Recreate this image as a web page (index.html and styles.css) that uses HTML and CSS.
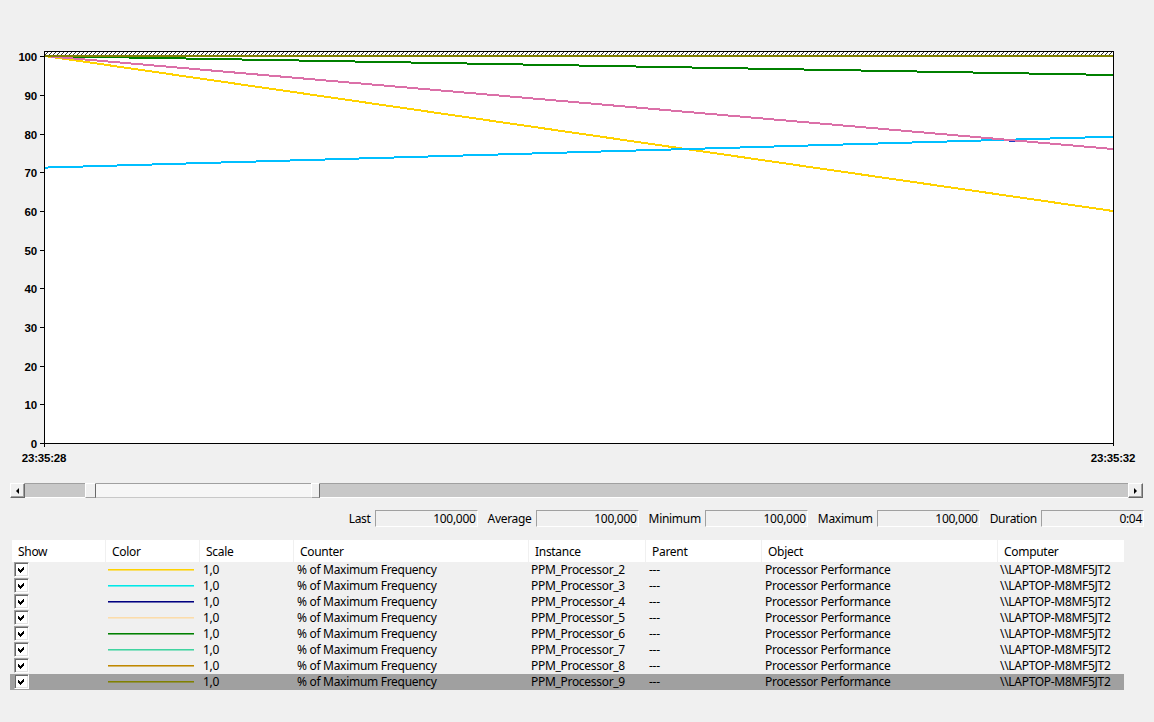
FILE: index.html
```html
<!DOCTYPE html>
<html>
<head>
<meta charset="utf-8">
<link rel="stylesheet" href="styles.css">
</head>
<body>
<div class="app">
  <svg class="chart" width="1154" height="472" viewBox="0 0 1154 472">
    <defs>
      <pattern id="hatch" width="4" height="4" patternUnits="userSpaceOnUse">
        <rect width="4" height="4" fill="#fff"/>
        <path d="M0,4 L4,0 M-1,1 L1,-1 M3,5 L5,3" stroke="#333" stroke-width="1"/>
      </pattern>
      <clipPath id="plot"><rect x="45" y="52" width="1068" height="391"/></clipPath>
    </defs>
    <rect x="44.5" y="51.5" width="1069" height="392" fill="#fff" stroke="#000" stroke-width="1"/>
    <rect x="45" y="52" width="1068" height="3" fill="url(#hatch)"/>
    <g clip-path="url(#plot)" shape-rendering="crispEdges" stroke-width="2" fill="none">
      <line x1="45" y1="56" x2="1113" y2="211" stroke="#ffd200"/>
      <line x1="45" y1="167.6" x2="1113" y2="136.7" stroke="#00bfff"/>
      <line x1="1009" y1="140.5" x2="1022" y2="140.5" stroke="#1a3cc8"/>
      <line x1="45" y1="56" x2="1113" y2="149" stroke="#db70a8"/>
      <line x1="45" y1="56" x2="1113" y2="75" stroke="#008000"/>
      <line x1="45" y1="55.5" x2="1113" y2="55.5" stroke="#808000"/>
    </g>
    <g stroke="#000" stroke-width="1" shape-rendering="crispEdges">
      <line x1="44.5" y1="443" x2="44.5" y2="447"/>
      <line x1="1113.5" y1="443" x2="1113.5" y2="446"/>
      <line x1="40" y1="56.5" x2="44" y2="56.5"/>
      <line x1="40" y1="95.5" x2="44" y2="95.5"/>
      <line x1="40" y1="134.5" x2="44" y2="134.5"/>
      <line x1="40" y1="172.5" x2="44" y2="172.5"/>
      <line x1="40" y1="211.5" x2="44" y2="211.5"/>
      <line x1="40" y1="250.5" x2="44" y2="250.5"/>
      <line x1="40" y1="288.5" x2="44" y2="288.5"/>
      <line x1="40" y1="327.5" x2="44" y2="327.5"/>
      <line x1="40" y1="366.5" x2="44" y2="366.5"/>
      <line x1="40" y1="404.5" x2="44" y2="404.5"/>
      <line x1="40" y1="443.5" x2="44" y2="443.5"/>
    </g>
    <g class="axis-text" text-anchor="end">
      <text x="37" y="61">100</text>
      <text x="37" y="100">90</text>
      <text x="37" y="139">80</text>
      <text x="37" y="177">70</text>
      <text x="37" y="216">60</text>
      <text x="37" y="255">50</text>
      <text x="37" y="293">40</text>
      <text x="37" y="332">30</text>
      <text x="37" y="371">20</text>
      <text x="37" y="409">10</text>
      <text x="37" y="448">0</text>
    </g>
    <g class="axis-text" text-anchor="middle">
      <text x="44" y="462">23:35:28</text>
      <text x="1113" y="462">23:35:32</text>
    </g>
  </svg>

  <div class="scrollbar">
    <div class="sb-btn"><span class="tri-left"></span></div>
    <div class="sb-dim sb-first"></div>
    <div class="sb-thumb"></div>
    <div class="sb-range"></div>
    <div class="sb-thumb sb-thumb-end"></div>
    <div class="sb-dim sb-rest"></div>
    <div class="sb-btn"><span class="tri-right"></span></div>
  </div>

  <div class="stats">
    <div class="stat"><span class="stat-label">Last</span><span class="stat-box">100,000</span></div>
    <div class="stat"><span class="stat-label">Average</span><span class="stat-box">100,000</span></div>
    <div class="stat"><span class="stat-label">Minimum</span><span class="stat-box">100,000</span></div>
    <div class="stat"><span class="stat-label">Maximum</span><span class="stat-box">100,000</span></div>
    <div class="stat"><span class="stat-label">Duration</span><span class="stat-box">0:04</span></div>
  </div>

  <div class="table">
    <div class="thead">
      <div class="th th-first">Show</div>
      <div class="th">Color</div>
      <div class="th">Scale</div>
      <div class="th">Counter</div>
      <div class="th">Instance</div>
      <div class="th">Parent</div>
      <div class="th">Object</div>
      <div class="th th-last">Computer</div>
    </div>

    <div class="tr">
      <div class="td"><span class="cb"><svg width="7" height="7" viewBox="0 0 7 7"><path d="M0,2 L2,4 L6,0 L6,3 L2,7 L0,5 Z" fill="#000"/></svg></span></div>
      <div class="td"><span class="swatch c-gold"></span></div>
      <div class="td td-p3">1,0</div>
      <div class="td td-p3">% of Maximum Frequency</div>
      <div class="td td-p2">PPM_Processor_2</div>
      <div class="td td-p3">---</div>
      <div class="td td-p3">Processor Performance</div>
      <div class="td td-p2">\\LAPTOP-M8MF5JT2</div>
    </div>
    <div class="tr">
      <div class="td"><span class="cb"><svg width="7" height="7" viewBox="0 0 7 7"><path d="M0,2 L2,4 L6,0 L6,3 L2,7 L0,5 Z" fill="#000"/></svg></span></div>
      <div class="td"><span class="swatch c-cyan"></span></div>
      <div class="td td-p3">1,0</div>
      <div class="td td-p3">% of Maximum Frequency</div>
      <div class="td td-p2">PPM_Processor_3</div>
      <div class="td td-p3">---</div>
      <div class="td td-p3">Processor Performance</div>
      <div class="td td-p2">\\LAPTOP-M8MF5JT2</div>
    </div>
    <div class="tr">
      <div class="td"><span class="cb"><svg width="7" height="7" viewBox="0 0 7 7"><path d="M0,2 L2,4 L6,0 L6,3 L2,7 L0,5 Z" fill="#000"/></svg></span></div>
      <div class="td"><span class="swatch c-navy"></span></div>
      <div class="td td-p3">1,0</div>
      <div class="td td-p3">% of Maximum Frequency</div>
      <div class="td td-p2">PPM_Processor_4</div>
      <div class="td td-p3">---</div>
      <div class="td td-p3">Processor Performance</div>
      <div class="td td-p2">\\LAPTOP-M8MF5JT2</div>
    </div>
    <div class="tr">
      <div class="td"><span class="cb"><svg width="7" height="7" viewBox="0 0 7 7"><path d="M0,2 L2,4 L6,0 L6,3 L2,7 L0,5 Z" fill="#000"/></svg></span></div>
      <div class="td"><span class="swatch c-moccasin"></span></div>
      <div class="td td-p3">1,0</div>
      <div class="td td-p3">% of Maximum Frequency</div>
      <div class="td td-p2">PPM_Processor_5</div>
      <div class="td td-p3">---</div>
      <div class="td td-p3">Processor Performance</div>
      <div class="td td-p2">\\LAPTOP-M8MF5JT2</div>
    </div>
    <div class="tr">
      <div class="td"><span class="cb"><svg width="7" height="7" viewBox="0 0 7 7"><path d="M0,2 L2,4 L6,0 L6,3 L2,7 L0,5 Z" fill="#000"/></svg></span></div>
      <div class="td"><span class="swatch c-green"></span></div>
      <div class="td td-p3">1,0</div>
      <div class="td td-p3">% of Maximum Frequency</div>
      <div class="td td-p2">PPM_Processor_6</div>
      <div class="td td-p3">---</div>
      <div class="td td-p3">Processor Performance</div>
      <div class="td td-p2">\\LAPTOP-M8MF5JT2</div>
    </div>
    <div class="tr">
      <div class="td"><span class="cb"><svg width="7" height="7" viewBox="0 0 7 7"><path d="M0,2 L2,4 L6,0 L6,3 L2,7 L0,5 Z" fill="#000"/></svg></span></div>
      <div class="td"><span class="swatch c-aqua"></span></div>
      <div class="td td-p3">1,0</div>
      <div class="td td-p3">% of Maximum Frequency</div>
      <div class="td td-p2">PPM_Processor_7</div>
      <div class="td td-p3">---</div>
      <div class="td td-p3">Processor Performance</div>
      <div class="td td-p2">\\LAPTOP-M8MF5JT2</div>
    </div>
    <div class="tr">
      <div class="td"><span class="cb"><svg width="7" height="7" viewBox="0 0 7 7"><path d="M0,2 L2,4 L6,0 L6,3 L2,7 L0,5 Z" fill="#000"/></svg></span></div>
      <div class="td"><span class="swatch c-goldenrod"></span></div>
      <div class="td td-p3">1,0</div>
      <div class="td td-p3">% of Maximum Frequency</div>
      <div class="td td-p2">PPM_Processor_8</div>
      <div class="td td-p3">---</div>
      <div class="td td-p3">Processor Performance</div>
      <div class="td td-p2">\\LAPTOP-M8MF5JT2</div>
    </div>
    <div class="tr tr-sel">
      <div class="td"><span class="cb"><svg width="7" height="7" viewBox="0 0 7 7"><path d="M0,2 L2,4 L6,0 L6,3 L2,7 L0,5 Z" fill="#000"/></svg></span></div>
      <div class="td"><span class="swatch c-olive"></span></div>
      <div class="td td-p3">1,0</div>
      <div class="td td-p3">% of Maximum Frequency</div>
      <div class="td td-p2">PPM_Processor_9</div>
      <div class="td td-p3">---</div>
      <div class="td td-p3">Processor Performance</div>
      <div class="td td-p2">\\LAPTOP-M8MF5JT2</div>
    </div>
  </div>
</div>
</body>
</html>
```

FILE: styles.css
```css
html, body {
  margin: 0;
  padding: 0;
  background: #f0f0f0;
}

body {
  font-family: "Noto Sans", "Liberation Sans", sans-serif;
  font-size: 12px;
  letter-spacing: -0.3px;
  color: #000;
  width: 1154px;
  height: 722px;
  overflow: hidden;
}

.chart {
  display: block;
}

.axis-text text {
  font-family: "Liberation Sans", Arial, sans-serif;
  font-size: 11.5px;
  font-weight: bold;
  letter-spacing: -0.2px;
  fill: #000;
}

/* time-range scrollbar */
.scrollbar {
  display: flex;
  height: 15px;
  margin: 11px 11px 0 10px;
}

.sb-btn {
  width: 15px;
  height: 15px;
  box-sizing: border-box;
  background: #f0f0f0;
  border: 1px solid;
  border-color: #ffffff #696969 #696969 #ffffff;
  box-shadow: inset -1px -1px 0 #a0a0a0;
  display: flex;
  align-items: center;
  justify-content: center;
  flex: none;
}

.tri-left {
  width: 0;
  height: 0;
  border-top: 3px solid transparent;
  border-bottom: 3px solid transparent;
  border-right: 3px solid #000;
}

.tri-right {
  width: 0;
  height: 0;
  border-top: 3px solid transparent;
  border-bottom: 3px solid transparent;
  border-left: 3px solid #000;
}

.sb-dim {
  background: #c8c8c8;
  border-top: 1px solid #a0a0a0;
  border-bottom: 1px solid #ffffff;
  box-sizing: border-box;
}

.sb-first {
  width: 60px;
  flex: none;
}

.sb-rest {
  flex: 1;
}

.sb-thumb {
  width: 11px;
  flex: none;
  box-sizing: border-box;
  background: #f0f0f0;
  border: 1px solid;
  border-color: #ffffff #696969 #a0a0a0 #ffffff;
}

.sb-thumb-end {
  width: 9px;
}

.sb-range {
  width: 215px;
  flex: none;
  box-sizing: border-box;
  background: #f6f6f6;
  border-top: 1px solid #a0a0a0;
  border-bottom: 1px solid #c8c8c8;
}

/* statistics row */
.stats {
  display: flex;
  justify-content: flex-end;
  gap: 10px;
  margin: 12px 10px 0 0;
  height: 17px;
}

.stat {
  display: flex;
  align-items: center;
  gap: 4px;
}

.stat-label {
  line-height: 17px;
}

.stat-box {
  width: 103px;
  height: 17px;
  box-sizing: border-box;
  border: 1px solid;
  border-color: #a0a0a0 #ffffff #ffffff #a0a0a0;
  text-align: right;
  padding-right: 1px;
  line-height: 15px;
}

/* counter table */
.table {
  margin: 13px 0 0 10px;
  width: 1114px;
}

.thead,
.tr {
  display: grid;
  grid-template-columns: 96px 94px 94px 235px 117px 116px 236px 126px;
}

.thead {
  height: 22px;
}

.th {
  background: #ffffff;
  border-right: 1px solid #f0f0f0;
  padding-left: 6px;
  padding-top: 1px;
  line-height: 22px;
  height: 22px;
  box-sizing: border-box;
  white-space: nowrap;
  overflow: hidden;
}

.th-first {
  border-left: 2px solid #f0f0f0;
}

.th-last {
  border-right: none;
}

.tr {
  height: 16px;
}

.tr-sel {
  background: #a0a0a0;
}

.td {
  line-height: 16px;
  white-space: nowrap;
  overflow: hidden;
}

.td-p3 {
  padding-left: 3px;
}

.td-p2 {
  padding-left: 2px;
}

.cb {
  display: flex;
  align-items: center;
  justify-content: center;
  width: 15px;
  height: 15px;
  margin-left: 4px;
  box-sizing: border-box;
  background: #ffffff;
  border: 1px solid;
  border-color: #a0a0a0 #ffffff #ffffff #a0a0a0;
  box-shadow: inset 1px 1px 0 #696969, inset -1px -1px 0 #e3e3e3;
}

.cb svg {
  display: block;
  shape-rendering: crispEdges;
}

.swatch {
  display: block;
  width: 86px;
  height: 1px;
  margin: 7px 0 0 2px;
  background: currentColor;
  box-shadow: 0 1px 0 color-mix(in srgb, currentColor 55%, transparent);
}

.c-gold { color: #ffd200; }
.c-cyan { color: #00e8e8; }
.c-navy { color: #000080; }
.c-moccasin { color: #fcdcaa; }
.c-green { color: #008000; }
.c-aqua { color: #40d4a0; }
.c-goldenrod { color: #c08800; }
.c-olive { color: #808000; }
```
